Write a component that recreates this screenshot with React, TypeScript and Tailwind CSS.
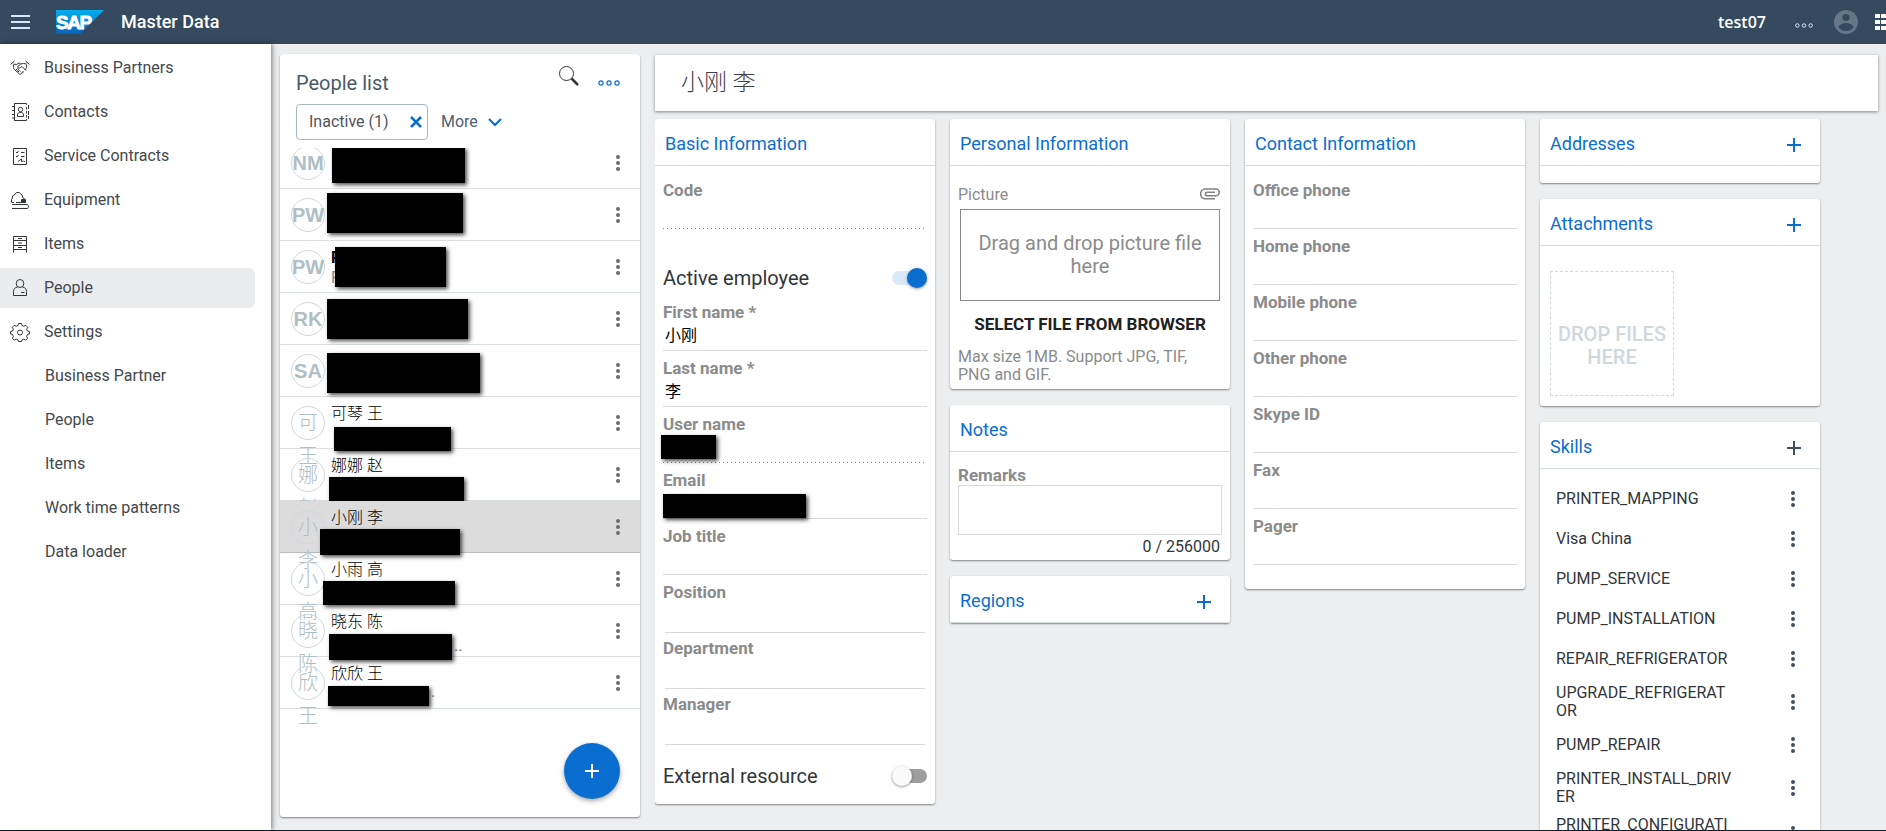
import type { ReactNode } from "react";

type Person = {
  id: number;
  initials: string;
  name?: string;
  bold?: boolean;
  detail?: string;
  tail?: string;
  selected?: boolean;
  mask: string;
};

const people: Person[] = [
  { id: 1, initials: "NM", mask: "left-[52px] top-[10px] h-9 w-[133px]" },
  { id: 2, initials: "PW", mask: "left-[47px] top-1 h-10 w-[136px]" },
  { id: 3, initials: "PW", name: "P", bold: true, detail: "P", mask: "left-[55px] top-[6px] h-10 w-[111px]" },
  { id: 4, initials: "RK", mask: "left-[47px] top-[6px] h-10 w-[141px]" },
  { id: 5, initials: "SA", mask: "left-[47px] top-2 h-10 w-[153px]" },
  { id: 6, initials: "可 王", name: "可琴 王", mask: "left-[54px] top-[30px] h-6 w-[117px]" },
  { id: 7, initials: "娜 赵", name: "娜娜 赵", mask: "left-[49px] top-7 h-6 w-[135px]" },
  { id: 8, initials: "小 李", name: "小刚 李", selected: true, mask: "left-10 top-7 h-[26px] w-[140px]" },
  { id: 9, initials: "小 高", name: "小雨 高", mask: "left-[43px] top-7 h-6 w-[132px]" },
  { id: 10, initials: "晓 陈", name: "晓东 陈", tail: "..", mask: "left-[49px] top-[29px] h-[26px] w-[123px]" },
  { id: 11, initials: "欣 王", name: "欣欣 王", tail: ".", mask: "left-12 top-[29px] h-5 w-[101px]" },
];

const contactFields = ["Office phone", "Home phone", "Mobile phone", "Other phone", "Skype ID", "Fax", "Pager"];

// long codes carry the place where they may wrap
const skills: string[][] = [
  ["PRINTER_MAPPING"],
  ["Visa China"],
  ["PUMP_SERVICE"],
  ["PUMP_INSTALLATION"],
  ["REPAIR_REFRIGERATOR"],
  ["UPGRADE_REFRIGERAT", "OR"],
  ["PUMP_REPAIR"],
  ["PRINTER_INSTALL_DRIV", "ER"],
  ["PRINTER_CONFIGURATI", "ON"],
];

const navIcon = "size-5 shrink-0 fill-none stroke-[#32363a]";

const HandshakeIcon = () => (
  <svg viewBox="0 0 20 20" className={navIcon}>
    <path d="M0.5 6.5 4.5 3M19.5 6.5l-4-3.500M3.500 6l3 .5 2.500-1.500 1.500.5M16.500 6l-3-.5-3 .5-3 3c.5 1.500 2 1.500 3 .5l1.500-1 4 4M3.500 6.500c-.5 2 0 4 1 5l5 4.500c1 .5 2 .2 2-.8M5.500 12.500l2-2 1 1-1.500 2M8 14l1.500-1.500 1 1M12.500 13l1 1c-.5 1-1.500 1-2 .5M16.500 6.500c.5 2 0 4-1.500 5.500" />
  </svg>
);

const ContactsIcon = () => (
  <svg viewBox="0 0 20 20" className={navIcon}>
    <path d="M4.500 3V1.500h12V3M4.500 5v2M4.500 9v2M4.500 13v2M4.500 17v1.500h12V17M16.500 5v2.500M16.500 9v2.500M16.500 13v2.500M4.500 1.500v17M2 4.500h3M2 8.500h3M2 12.500h3M2 16h3M18.500 3v4M18.500 9v4M18.500 14v3" />
    <circle cx="10.500" cy="7.500" r="2.200" />
    <path d="M7.500 14.500V13c0-1.500 1-2.500 2-2.500h2c1 0 2 1 2 2.500v1.500z" />
  </svg>
);

const ContractIcon = () => (
  <svg viewBox="0 0 20 20" className={navIcon}>
    <path d="M3.500 2.500h13v16h-13zM6 6l1 1 1.500-2M11 6.500h3.500M6 10l1 1 1.500-2M11 10.500h3.500M8 15.500l2-1.500 1.500-1v2.500l2-.5.5.5h1" />
  </svg>
);

const EquipmentIcon = () => (
  <svg viewBox="0 0 20 20" className={navIcon}>
    <path d="M2 12.500h2M6 12.500h9.500V9.500L13 8l-1-3-3-2.500H6.500L5 4.500 2.500 6v2L1.500 9.500v3M2 14.500h15c2 0 2 4 0 4H2" />
    <path d="M11.500 12V9.500h3V12z" className="fill-[#32363a]" />
  </svg>
);

const ItemsIcon = () => (
  <svg viewBox="0 0 20 20" className={navIcon}>
    <path d="M3.500 18.500v-16h13v16M3.500 6.500h13M3.500 11.500h13M3.500 15.500h13M8 4.500h4M8 9h4M8 13.500h4" />
  </svg>
);

const PersonIcon = () => (
  <svg viewBox="0 0 20 20" className={navIcon}>
    <ellipse cx="10" cy="5.500" rx="3.800" ry="4" />
    <path d="M7.500 9c-2.500.5-4 2-4 4.500v4h13v-4c0-2.500-1.500-4-4-4.500M11 14.500h3.500" />
  </svg>
);

const GearIcon = () => (
  <svg viewBox="0 0 20 20" className={navIcon}>
    <path d="M8.500 1.500h3l.5 2 1.800.8 1.900-1 2 2-1.100 1.900.8 1.800 2 .5v2.500l-2 .5-.8 1.800 1.100 1.900-2 2-1.900-1-1.800.8-.5 1.500h-3l-.5-1.500-1.800-.8-1.900 1-2-2 1.100-1.900-.8-1.800-2-.5V9.500l2-.5.8-1.800-1.100-1.900 2-2 1.900 1 1.800-.8z" />
    <circle cx="10" cy="10.500" r="2.500" />
  </svg>
);

const navItems = [
  { label: "Business Partners", icon: <HandshakeIcon /> },
  { label: "Contacts", icon: <ContactsIcon /> },
  { label: "Service Contracts", icon: <ContractIcon /> },
  { label: "Equipment", icon: <EquipmentIcon /> },
  { label: "Items", icon: <ItemsIcon /> },
  { label: "People", icon: <PersonIcon />, active: true },
  { label: "Settings", icon: <GearIcon /> },
];

const subItems = ["Business Partner", "People", "Items", "Work time patterns", "Data loader"];

const Kebab = ({ className }: { className: string }) => (
  <svg viewBox="0 0 24 24" className={`size-6 ${className}`} fill="currentColor">
    <circle cx="12" cy="6" r="2" />
    <circle cx="12" cy="12" r="2" />
    <circle cx="12" cy="18" r="2" />
  </svg>
);

const Plus = ({ className = "" }: { className?: string }) => (
  <svg viewBox="0 0 24 24" className={`size-6 ${className}`} fill="none" stroke="currentColor" strokeWidth="2">
    <path d="M12 5v14M5 12h14" />
  </svg>
);

const Dots = ({ className }: { className: string }) => (
  <svg viewBox="0 0 22 6" className={className} fill="none" stroke="currentColor" strokeWidth="1.200">
    <circle cx="3" cy="3" r="2.100" />
    <circle cx="11" cy="3" r="2.100" />
    <circle cx="19" cy="3" r="2.100" />
  </svg>
);

const SapLogo = () => (
  <svg viewBox="0 0 48 24" className="h-6 w-12" role="img" aria-label="SAP">
    <defs>
      <linearGradient id="sap" x1="0" y1="0" x2="0" y2="1">
        <stop offset="0" stopColor="#00aeef" />
        <stop offset="1" stopColor="#0a62b8" />
      </linearGradient>
    </defs>
    <path d="M0 0h48L24 24H0z" fill="url(#sap)" />
    <text x="0" y="19" fontSize="19" fontWeight="700" letterSpacing="-1.500" fill="#fff" stroke="#fff" strokeWidth=".8" fontFamily="Liberation Sans, sans-serif">
      SAP
    </text>
  </svg>
);

function Mask({ className, children }: { className: string; children?: ReactNode }) {
  return <span className={`absolute bg-black shadow-[2px_2px_4px_rgba(0,0,0,0.7)] ${className}`}>{children}</span>;
}

function Card({ title, add, children }: { title: string; add?: string; children?: ReactNode }) {
  return (
    <section className="rounded-[3px] bg-white shadow-[0_1px_2px_rgba(0,0,0,0.45)]">
      <header className="flex h-[47px] items-center justify-between border-b border-[#d9dcde] pt-1 pr-3.5 pl-2.5">
        <h2 className="text-lg text-[#0a6ed1]">{title}</h2>
        {add && (
          <button aria-label={`Add ${title}`} className="pt-0.5">
            <Plus className={add} />
          </button>
        )}
      </header>
      {children}
    </section>
  );
}

type FieldProps = { label: string; value?: string; dotted?: boolean; picker?: boolean; mask?: string };

function Field({ label, value = "", dotted, picker, mask }: FieldProps) {
  const id = label.toLowerCase().replace(/\W+/g, "-");
  const line = dotted
    ? "bg-[repeating-linear-gradient(90deg,#8a8a8a_0_1px,transparent_1px_4px)] bg-[length:100%_1px] bg-bottom bg-no-repeat"
    : "border-b border-[#d9d9d9]";
  return (
    <div className={`relative flex flex-col pt-[7px] ${picker ? "-mb-0.5 h-[58px]" : "h-14"}`}>
      <label htmlFor={id} className="text-[17px] leading-5 font-bold text-[#8b8b8b]">
        {label}
      </label>
      <input
        id={id}
        defaultValue={value}
        readOnly={dotted}
        className={`min-h-0 flex-1 px-0.5 text-base leading-5 text-black outline-none ${line} ${picker ? "mx-0.5" : ""}`}
      />
      {mask && <Mask className={mask} />}
    </div>
  );
}

function Header() {
  return (
    <header className="flex h-11 shrink-0 items-center overflow-hidden bg-[#354a5f] pl-[11px] text-white">
      <button aria-label="Menu" className="mr-[26px]">
        <svg viewBox="0 0 19 14" className="h-3.5 w-[19px] stroke-[#d1e8ff]" strokeWidth="2">
          <path d="M0 1h19M0 7h19M0 13h19" />
        </svg>
      </button>
      <SapLogo />
      <h1 className="ml-[17px] flex-1 text-lg font-medium">Master Data</h1>
      <span className="mr-7 font-['Open_Sans',sans-serif] text-base font-semibold">test07</span>
      <button aria-label="More options" className="mt-1.5">
        <Dots className="h-[5px] w-5 text-[#d1e8ff]" />
      </button>
      <svg viewBox="0 0 24 24" className="ml-5 size-6">
        <circle cx="12" cy="12" r="12" fill="#647688" />
        <circle cx="12" cy="7.500" r="3.600" fill="#354a5f" />
        <path d="M4.500 17c1.500-3 4.500-4 7.500-4s6 1 7.500 4c-2 3-4.500 4-7.500 4s-5.500-1-7.500-4z" fill="#354a5f" />
      </svg>
      <svg viewBox="0 0 16 16" className="-mr-[5px] ml-[17px] size-4 shrink-0" fill="#fff">
        <path d="M0 0h5v4H0zM6 0h5v4H6zM12 0h4v4h-4zM0 6h5v4H0zM6 6h5v4H6zM12 6h4v4h-4zM0 12h5v4H0zM6 12h5v4H6zM12 12h4v4h-4z" />
      </svg>
    </header>
  );
}

function Sidebar() {
  return (
    <nav className="z-10 flex w-[271px] shrink-0 flex-col gap-1 bg-white pt-1 text-base text-[#44484c] shadow-[1px_0_5px_rgba(0,0,0,0.5)]">
      {navItems.map((item) => (
        <a
          key={item.label}
          href="#"
          className={`mr-4 flex h-10 items-center gap-3.5 rounded-r-md pl-2.5 ${item.active ? "bg-[#ebecee]" : ""}`}
        >
          {item.icon}
          {item.label}
        </a>
      ))}
      {subItems.map((label) => (
        <a key={label} href="#" className="mr-4 flex h-10 items-center pl-[45px]">
          {label}
        </a>
      ))}
    </nav>
  );
}

function PersonRow({ person }: { person: Person }) {
  return (
    <li
      className={`relative flex h-13 gap-1.5 border-b pr-2.5 pl-[11px] ${
        person.selected ? "border-[#bdbdbd] bg-[#dcdcdc]" : "border-[#dcdfe0]"
      }`}
    >
      <div className="mt-[9px] size-[34px] shrink-0 rounded-full border border-[#cfd8dc] text-center font-['Liberation_Sans','Noto_Sans_CJK_SC',sans-serif] text-xl leading-[33px] text-[#b0bec5]">
        <span className={person.initials.length === 2 ? "font-bold" : "font-light"}>{person.initials}</span>
      </div>
      <div className="flex-1 pt-[7px]">
        <p className={`text-base leading-5 text-black ${person.bold ? "font-bold" : "font-light"}`}>{person.name}</p>
        <p className="text-base leading-5 text-[#8a8a8a]">{person.detail}</p>
      </div>
      <button aria-label="Person actions" className="self-center">
        <Kebab className="text-[#6a6d70]" />
      </button>
      <Mask className={person.mask}>
        {person.tail && <span className="absolute bottom-1 left-full pl-0.5 text-base leading-5 text-[#6a6d70]">{person.tail}</span>}
      </Mask>
    </li>
  );
}

function PeopleList() {
  return (
    <section className="relative mt-2.5 mb-[13px] flex w-[360px] shrink-0 flex-col rounded-[3px] bg-white shadow-[0_1px_2px_rgba(0,0,0,0.45)]">
      <header className="flex h-[50px] items-start gap-[19px] pt-3 pr-5 pl-4">
        <h2 className="flex-1 pt-[3px] text-xl text-[#4a5a68]">People list</h2>
        <button aria-label="Search">
          <svg viewBox="0 0 20 20" className="size-5" fill="none" stroke="#32363a">
            <circle cx="7.500" cy="7.500" r="7" />
            <path d="M12.500 12.500l6.500 6.500" strokeWidth="2.500" />
          </svg>
        </button>
        <button aria-label="List options" className="mt-[14px]">
          <Dots className="h-1.5 w-[22px] text-[#0a6ed1]" />
        </button>
      </header>
      <div className="flex items-center gap-[13px] px-4 text-base text-[#51555a]">
        <div className="flex h-9 w-[132px] items-center justify-between rounded border border-[#a9b7c0] pr-[5px] pl-3">
          Inactive (1)
          <button aria-label="Remove filter">
            <svg viewBox="0 0 12 12" className="size-3" stroke="#0a6ed1" strokeWidth="2.500">
              <path d="M1 1l10 10M11 1L1 11" />
            </svg>
          </button>
        </div>
        <button className="flex items-center gap-2.5 text-[#4d5f6e]">
          More
          <svg viewBox="0 0 14 9" className="h-[9px] w-3.5" fill="none" stroke="#0a6ed1" strokeWidth="2.200">
            <path d="M1 1l6 6 6-6" />
          </svg>
        </button>
      </div>
      <div className="mt-2 min-h-0 flex-1 overflow-hidden">
        <ul className="-mt-[11px]">
          {people.map((p) => (
            <PersonRow key={p.id} person={p} />
          ))}
        </ul>
      </div>
      <button
        aria-label="Add person"
        className="absolute right-5 bottom-[18px] flex size-14 items-center justify-center rounded-full bg-[#0a6ed1] text-white shadow-[0_2px_5px_rgba(0,0,0,0.35)]"
      >
        <Plus />
      </button>
    </section>
  );
}

export default function App() {
  return (
    <div className="flex h-screen flex-col border-b border-[#101d2b] bg-[#edeef0] font-['Roboto','Noto_Sans_CJK_SC',sans-serif] text-[#32363a]">
      <Header />
      <div className="flex min-h-0 flex-1">
        <Sidebar />
        <main className="flex min-w-0 flex-1 gap-[15px] pr-2 pl-[9px]">
          <PeopleList />
          <div className="flex min-w-0 flex-1 flex-col pt-[11px]">
            <div className="flex h-14 shrink-0 items-center bg-white pl-[26px] shadow-[0_1px_3px_rgba(0,0,0,0.45)]">
              <h2 className="text-[23px] leading-8 font-light text-[#3c4043]">小刚 李</h2>
            </div>
            <div className="flex min-h-0 flex-1 items-start gap-[15px] overflow-hidden pt-2">
              <div className="w-[280px] shrink-0">
                <Card title="Basic Information">
                  <div className="px-2 pt-[7px]">
                    <Field label="Code" dotted />
                    <label className="flex h-[66px] items-center justify-between pt-8 text-xl">
                      Active employee
                      <input
                        type="checkbox"
                        defaultChecked
                        className="relative h-3.5 w-[35px] appearance-none rounded-full bg-[#d9e9f8] before:absolute before:-top-[3px] before:right-0 before:size-5 before:rounded-full before:bg-[#0a6ed1] before:shadow-[0_1px_3px_rgba(0,0,0,0.4)]"
                      />
                    </label>
                    <Field label="First name *" value="小刚" />
                    <Field label="Last name *" value="李" />
                    <Field label="User name" dotted mask="top-[28px] -left-0.5 h-6 w-[55px]" />
                    <Field label="Email" mask="top-[31px] left-0 h-6 w-[143px]" />
                    <Field label="Job title" />
                    <Field label="Position" picker />
                    <Field label="Department" picker />
                    <Field label="Manager" picker />
                    <label className="flex h-[61px] items-center justify-between pt-1 text-xl">
                      External resource
                      <input
                        type="checkbox"
                        className="relative h-3.5 w-[35px] appearance-none rounded-full bg-[#9e9e9e] before:absolute before:-top-[3px] before:left-0 before:size-5 before:rounded-full before:bg-[#fafafa] before:shadow-[0_1px_3px_rgba(0,0,0,0.4)]"
                      />
                    </label>
                  </div>
                </Card>
              </div>

              <div className="flex w-[280px] shrink-0 flex-col gap-4">
                <Card title="Personal Information">
                  <div className="px-2 pt-[19px] pb-[5px] text-[#8b8b8b]">
                    <div className="flex h-6 items-start justify-between pr-0.5">
                      <span className="text-base leading-5">Picture</span>
                      <button aria-label="Attach picture" className="pt-[3px]">
                        <svg viewBox="0 0 20 12" className="h-3 w-5" fill="none" stroke="#808080" strokeWidth="1.600">
                          <path d="M15 10.800H5.500a4.800 4.800 0 0 1 0-9.800h10.300a3.400 3.400 0 0 1 0 6.800H7.300a1.700 1.700 0 0 1 0-3.600H15" />
                        </svg>
                      </button>
                    </div>
                    <div className="mx-0.5 flex h-[92px] items-center justify-center border border-[#898989] px-3 text-center text-xl leading-[23px]">
                      Drag and drop picture file here
                    </div>
                    <button className="mt-[11px] block h-6 w-full text-center text-[17px] leading-6 font-bold whitespace-nowrap text-[#212121]">
                      SELECT FILE FROM BROWSER
                    </button>
                    <p className="mt-3 text-base leading-[18px]">Max size 1MB. Support JPG, TIF, PNG and GIF.</p>
                  </div>
                </Card>

                <Card title="Notes">
                  <div className="flex flex-col px-2 pt-[13px] pb-[3px]">
                    <label htmlFor="remarks" className="text-[17px] leading-5 font-bold text-[#8b8b8b]">
                      Remarks
                    </label>
                    <textarea id="remarks" className="h-[50px] resize-none border border-[#d9d9d9] outline-none" />
                    <span className="pt-0.5 pr-0.5 text-right text-base leading-5">0 / 256000</span>
                  </div>
                </Card>

                <Card title="Regions" add="text-[#0a6ed1]" />
              </div>

              <div className="w-[280px] shrink-0">
                <Card title="Contact Information">
                  <div className="px-2 pt-[7px] pb-6">
                    {contactFields.map((label) => (
                      <Field key={label} label={label} />
                    ))}
                  </div>
                </Card>
              </div>

              <div className="flex w-[280px] shrink-0 flex-col gap-4">
                <Card title="Addresses" add="text-[#0a6ed1]">
                  <div className="h-[17px]" />
                </Card>
                <Card title="Attachments" add="text-[#0a6ed1]">
                  <div className="px-2.5 pt-[25px] pb-2.5">
                    <div className="flex h-[125px] w-[124px] items-center justify-center border border-dashed border-[#cfd8dc] pt-6 text-center text-xl leading-[23px] font-medium text-[#cfd8dc]">
                      DROP FILES HERE
                    </div>
                  </div>
                </Card>
                <Card title="Skills" add="text-[#3f5161]">
                  <ul className="pt-2.5 pr-[15px] pb-2.5 pl-4 text-base leading-[18px]">
                    {skills.map(([head, rest]) => (
                      <li key={head} className={`flex items-center justify-between ${rest ? "h-[46px]" : "h-10"}`}>
                        <span className="w-44">
                          {head}
                          {rest && <wbr />}
                          {rest}
                        </span>
                        <button aria-label="Skill actions">
                          <Kebab className="text-[#3f5161]" />
                        </button>
                      </li>
                    ))}
                  </ul>
                </Card>
              </div>
            </div>
          </div>
        </main>
      </div>
    </div>
  );
}
